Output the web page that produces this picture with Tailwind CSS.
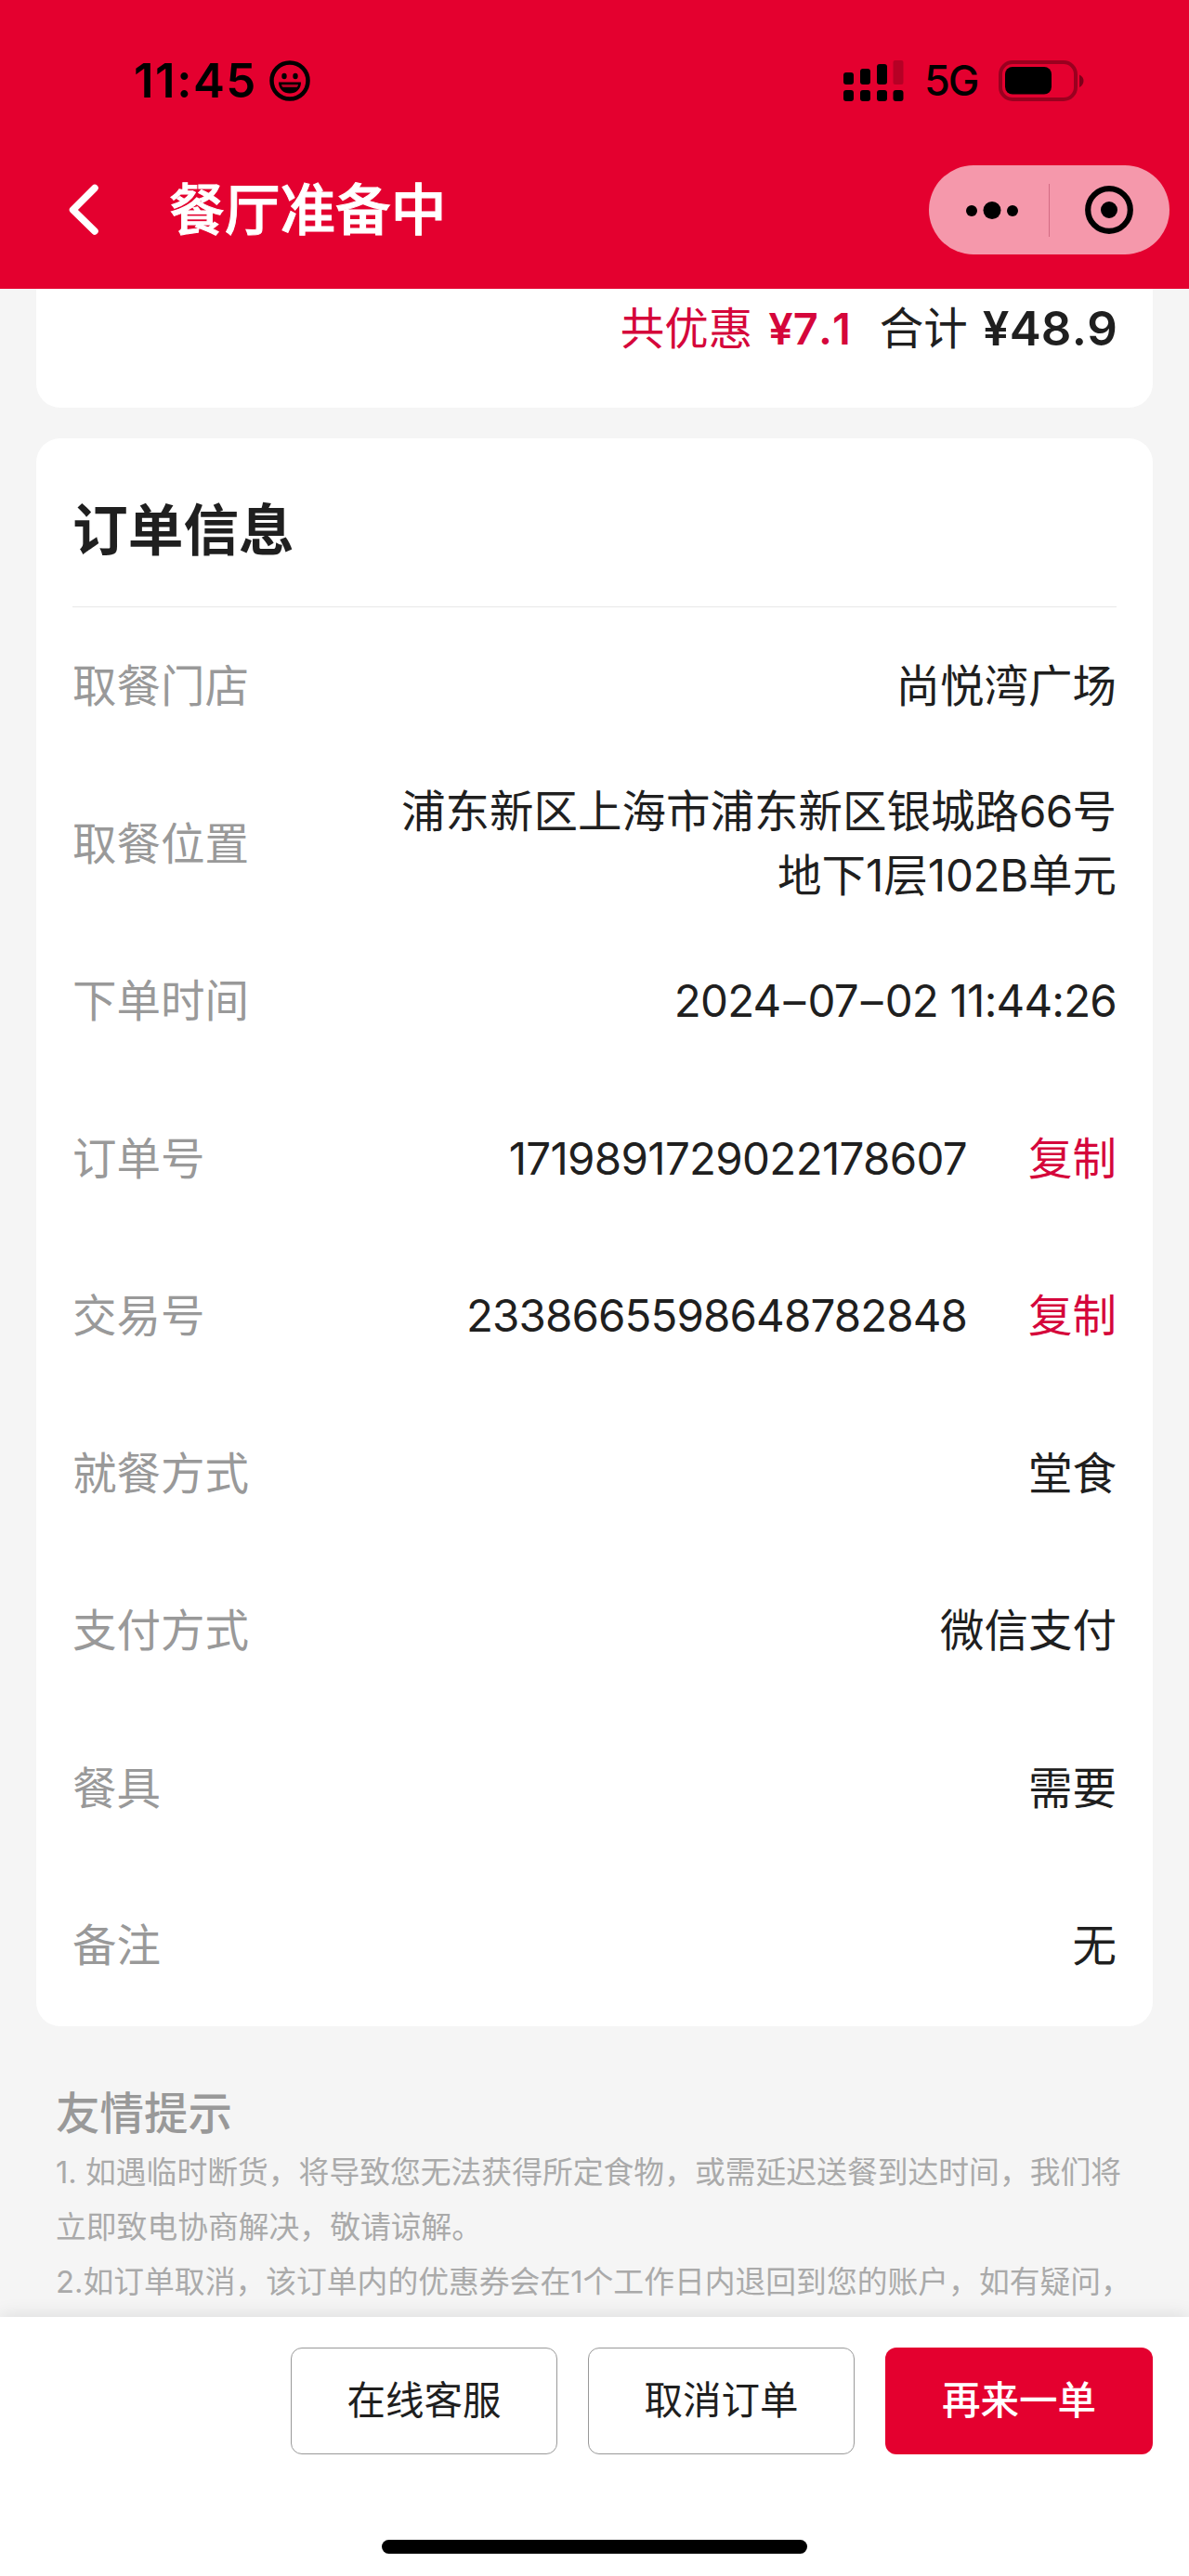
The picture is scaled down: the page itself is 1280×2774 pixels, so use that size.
<!DOCTYPE html>
<html lang="zh-CN">
<head>
<meta charset="utf-8">
<meta name="viewport" content="width=device-width, initial-scale=1">
<title>餐厅准备中</title>
<script src="https://cdn.jsdelivr.net/npm/@tailwindcss/browser@4"></script>
</head>
<body class="bg-[#f5f5f5] font-['Inter','Noto_Sans_CJK_SC',sans-serif] text-[#1f1f1f]">
<div class="flex h-[2774px] w-[1280px] flex-col overflow-hidden">

  <header class="h-[311px] shrink-0 bg-[#e4002f]">
    <!-- Status bar -->
    <div class="flex h-[174px] items-center justify-between pl-[144px] pr-[112px]">
      <div class="flex items-center gap-[13px] text-black">
        <span class="text-[51px] font-semibold leading-[60px] tracking-[1.5px]">11:45</span>
        <svg class="size-[44px]" viewBox="0 0 44 44">
          <circle cx="22" cy="22" r="19.5" fill="none" stroke="#000" stroke-width="4.5"/>
          <ellipse cx="16" cy="17" rx="2.7" ry="3.2"/>
          <ellipse cx="28" cy="17" rx="2.7" ry="3.2"/>
          <path d="M10 23.5H34C34 31 29 35.5 22 35.5S10 31 10 23.5Z"/>
          <path d="M13 26H31Q30.600 29 29.500 29H14.500Q13.400 29 13 26Z" fill="#e4002f" opacity=".75"/>
        </svg>
      </div>
      <div class="flex items-center">
        <svg class="h-[46px] w-[65px]" viewBox="0 0 65 46">
          <rect x="0" y="14" width="11" height="13" rx="3"/>
          <rect x="18" y="10" width="11" height="17" rx="3"/>
          <rect x="36" y="5" width="11" height="22" rx="3"/>
          <rect x="53.500" y="1" width="11" height="26" rx="2" opacity=".2"/>
          <rect x="0" y="33" width="11" height="12" rx="3"/>
          <rect x="18" y="33" width="11" height="12" rx="3"/>
          <rect x="36" y="33" width="11" height="12" rx="3"/>
          <rect x="53.500" y="33" width="11" height="12" rx="3"/>
        </svg>
        <span class="ml-[22px] w-[80px] text-[45px] font-medium leading-[60px] tracking-[-2px] text-black">5G</span>
        <svg class="h-[44px] w-[93px]" viewBox="0 0 93 44">
          <rect x="2" y="2" width="81" height="40" rx="13" fill="none" stroke="#000" stroke-opacity=".32" stroke-width="4"/>
          <rect x="7" y="7" width="50" height="29.500" rx="8"/>
          <path d="M87 15.500C93 18 93 26 87 29Z" opacity=".45"/>
        </svg>
      </div>
    </div>
    <!-- Navigation -->
    <div class="flex h-[104px] items-center pl-[72px] pr-[21px]">
      <svg class="h-[58px] w-[36px]" viewBox="0 0 36 58" fill="none" stroke="#fff" stroke-width="7.500" stroke-linecap="round" stroke-linejoin="round"><path d="M30 5.500 6.500 29 30 52"/></svg>
      <h1 class="ml-[74px] text-[59.7px] font-medium leading-[80px] text-white [-webkit-text-stroke:1px_white]">餐厅准备中</h1>
      <div class="ml-auto flex h-[96px] w-[259px] items-center rounded-full bg-[#f598ab]">
        <svg class="h-[96px] w-[259px]" viewBox="0 0 259 96">
          <circle cx="46" cy="49" r="6"/><circle cx="68" cy="48.500" r="9.500"/><circle cx="90" cy="49" r="6"/>
          <path d="M129.500 20V77" stroke="#d36b84" stroke-width="1"/>
          <circle cx="194" cy="48" r="22.800" fill="none" stroke="#000" stroke-width="6.200"/><circle cx="194" cy="48" r="9"/>
        </svg>
      </div>
    </div>
  </header>

  <main class="h-[2184px] shrink-0 overflow-hidden px-[39px]">
    <section class="flex h-[128px] items-start justify-end rounded-b-[26px] bg-white pr-[38px] pt-[6px] leading-[74px]">
      <span class="text-[47.500px] text-[#d5063b]">共优惠</span>
      <span class="ml-[17px] text-[47px] font-semibold text-[#d5063b] [font-kerning:none]">¥7.1</span>
      <span class="ml-[31px] text-[47.500px]">合计</span>
      <span class="ml-[16px] text-[51px] font-semibold tracking-[0.2px] [font-kerning:none]">¥48.9</span>
    </section>

    <section class="mt-[33px] h-[1709.5px] rounded-[26px] bg-white px-[39px]">
      <h2 class="flex h-[182px] items-center border-b border-[#e8e8e8] pt-[18px] text-[59.7px] font-bold">订单信息</h2>
      <dl class="text-[47.500px] leading-[69px]">
        <div class="flex h-[169.5px] items-center justify-between"><dt class="text-[#999]">取餐门店</dt><dd>尚悦湾广场</dd></div>
        <div class="flex h-[169.5px] items-center justify-between"><dt class="text-[#999]">取餐位置</dt><dd class="text-right">浦东新区上海市浦东新区银城路<span class="tracking-[-0.700px]">66</span>号<br>地下<span>1</span>层<span class="tracking-[-0.300px]">102B</span>单元</dd></div>
        <div class="flex h-[169.5px] items-center justify-between"><dt class="text-[#999]">下单时间</dt><dd class="tracking-[-0.800px]">2024<span class="mx-[3px]">–</span>07<span class="mx-[3px]">–</span>02 11:44:26</dd></div>
        <div class="flex h-[169.5px] items-center"><dt class="text-[#999]">订单号</dt><dd class="ml-auto tracking-[-0.700px]">1719891729022178607</dd><dd class="ml-[66px] text-[#d5063b]">复制</dd></div>
        <div class="flex h-[169.5px] items-center"><dt class="text-[#999]">交易号</dt><dd class="ml-auto tracking-[-0.900px]">2338665598648782848</dd><dd class="ml-[66px] text-[#d5063b]">复制</dd></div>
        <div class="flex h-[169.5px] items-center justify-between"><dt class="text-[#999]">就餐方式</dt><dd>堂食</dd></div>
        <div class="flex h-[169.5px] items-center justify-between"><dt class="text-[#999]">支付方式</dt><dd>微信支付</dd></div>
        <div class="flex h-[169.5px] items-center justify-between"><dt class="text-[#999]">餐具</dt><dd>需要</dd></div>
        <div class="flex h-[169.5px] items-center justify-between"><dt class="text-[#999]">备注</dt><dd>无</dd></div>
      </dl>
    </section>

    <section class="whitespace-nowrap pl-[21px] pt-[60px]">
      <h3 class="text-[47.500px] font-medium leading-[68px] text-[#999]">友情提示</h3>
      <p class="text-[32.800px] leading-[59.4px] text-[#aaa]">1. 如遇临时断货，将导致您无法获得所定食物，或需延迟送餐到达时间，我们将<br>立即致电协商解决，敬请谅解。<br>2.如订单取消，该订单内的优惠券会在1个工作日内退回到您的账户，如有疑问，</p>
    </section>
  </main>

  <footer class="relative flex grow flex-col items-center bg-white pt-[33px] shadow-[0_0_20px_rgba(0,0,0,0.12)]">
    <div class="flex w-full justify-end gap-[33px] pr-[39px] text-[41.500px]">
      <button class="h-[115px] w-[287px] rounded-[12px] border border-[#999]">在线客服</button>
      <button class="h-[115px] w-[287px] rounded-[12px] border border-[#999]">取消订单</button>
      <button class="h-[115px] w-[288px] rounded-[12px] bg-[#e4002f] font-medium text-white">再来一单</button>
    </div>
    <div class="mt-[92px] h-[15px] w-[458px] rounded-full bg-black"></div>
  </footer>
</div>
</body>
</html>
